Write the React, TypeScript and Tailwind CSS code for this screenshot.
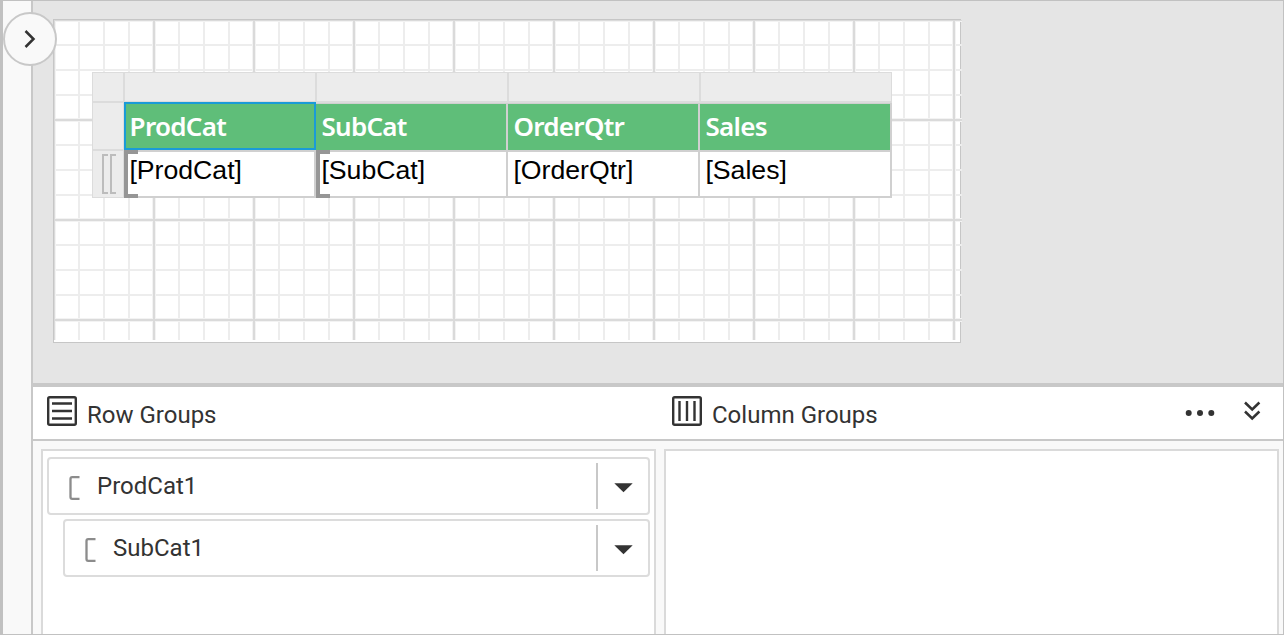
const columns = ['ProdCat', 'SubCat', 'OrderQtr', 'Sales'];

function GridLines() {
  return (
    <svg className="pointer-events-none absolute -top-px -left-px" width="909" height="321" viewBox="0 0 909 321" shapeRendering="crispEdges">
      <defs>
        <pattern id="minor" width="25" height="25" patternUnits="userSpaceOnUse">
          <path d="M0 0h25v2H2v23H0z" fill="#ededed" />
        </pattern>
        <pattern id="major" x="-1" y="-1" width="100" height="100" patternUnits="userSpaceOnUse">
          <path d="M0 0h100v4H4v96H0z" fill="#f3f3f3" />
          <path d="M1 0h2v100h-2zM0 1h100v2H0z" fill="#dadada" />
        </pattern>
      </defs>
      <rect x="1" y="1" width="908" height="320" fill="url(#minor)" />
      <rect x="1" y="1" width="908" height="320" fill="url(#major)" />
    </svg>
  );
}

function GroupBracket() {
  return (
    <div className="absolute top-[-2px] left-0 h-12 w-[14px] border-y-4 border-l-4 border-[#969696]" />
  );
}

function HeaderStrip() {
  return (
    <div className="flex h-[31px] border border-b-2 border-[#dcdcdc] bg-[#ececec]">
      <div className="w-8 border-r-2 border-[#dcdcdc]" />
      <div className="w-48 border-r-2 border-[#dcdcdc]" />
      <div className="w-48 border-r-2 border-[#dcdcdc]" />
      <div className="w-48 border-r-2 border-[#dcdcdc]" />
      <div className="flex-1" />
    </div>
  );
}

function Tablix() {
  return (
    <div className="relative w-[800px]">
      <HeaderStrip />
      <div className="flex">
        <div className="w-8 border-x border-b border-[#dcdcdc] bg-[#ececec]">
          <div className="h-12 border-b-2 border-[#dcdcdc]" />
          <div className="flex h-[46px] gap-[2px] pt-[3px] pl-[9px]">
            <div className="h-10 w-[6px] border-y-2 border-l-2 border-[#bcbcbc]" />
            <div className="h-10 w-[6px] border-y-2 border-l-2 border-[#bcbcbc]" />
          </div>
        </div>
        <div className="w-[768px]">
          <div className="flex h-[49px] border-y-[2px] border-t-[1px] border-[#d0d0d0] bg-[#5fbe79]">
            {columns.map((name, i) => (
              <div
                key={name}
                className={
                  i === 0
                    ? 'relative -mt-[2px] h-12 w-48 border-2 border-[#1a9bd7] pt-[4px] pl-[3.6px] font-["Noto_Sans",sans-serif] text-[26px] leading-[36px] font-semibold tracking-[-0.7px] text-white'
                    : 'h-[46px] w-48 border-r-2 border-[#d0d0d0] pt-[4px] pl-[5.4px] font-["Noto_Sans",sans-serif] text-[26px] leading-[36px] font-semibold tracking-[-0.7px] text-white'
                }
              >
                {name}
              </div>
            ))}
          </div>
          <div className="flex h-[46px] border-b-2 border-[#d0d0d0] bg-white">
            {columns.map((name, i) => (
              <div
                key={name}
                className='relative w-48 border-r-2 border-[#d0d0d0] pt-[3px] pl-[5.4px] font-["Liberation_Sans",sans-serif] text-[26.67px] leading-[30px] text-black'
              >
                {i < 2 && <GroupBracket />}
                {`[${name}]`}
              </div>
            ))}
          </div>
        </div>
      </div>
    </div>
  );
}

function GroupItem({ label }: { label: string }) {
  return (
    <div className="flex h-[58px] items-center rounded-[4px] border-2 border-[#dcdcdc] bg-white">
      <svg className="mt-1 ml-5" width="11" height="24" viewBox="0 0 11 24" fill="none" stroke="#8c8c8c" strokeWidth="2.3">
        <path d="M10.5 1.2H3.2Q1.5 1.2 1.5 3v18q0 1.8 1.7 1.8h7.3" />
      </svg>
      <span className="ml-[17px] flex-1 leading-7">{label}</span>
      <div className="flex h-[46px] w-[52px] items-center border-l-2 border-[#c8c8c8] pl-4">
        <svg className="mt-1" width="19" height="10" viewBox="0 0 19 10">
          <path d="M.3.3h18.4l-9.2 9z" fill="#333" />
        </svg>
      </div>
    </div>
  );
}

function GroupIcon({ vertical }: { vertical?: boolean }) {
  return (
    <svg width="30" height="30" viewBox="0 0 30 30" fill="none" stroke="#333" strokeWidth="2.4">
      <rect x="1.2" y="1.2" width="27.6" height="27.6" rx="1.5" />
      <path d={vertical ? 'M7.5 5v20M15 5v20M22.5 5v20' : 'M5 7.5h20M5 15h20M5 22.5h20'} />
    </svg>
  );
}

export default function App() {
  return (
    <div className='flex h-[635px] w-[1284px] overflow-hidden border border-l-[3px] border-[#c1c1c1] bg-[#f9f9f9] font-[Roboto,sans-serif] text-[24px] text-[#333]'>
      <aside className="relative w-[30px] shrink-0 border-r-2 border-[#c8c8c8]">
        <button className="absolute top-[11px] left-0 z-10 flex h-[54px] w-[54px] items-center justify-center rounded-full border-2 border-[#c8c8c8] bg-[#f9f9f9]">
          <svg width="12" height="20" viewBox="0 0 12 20" fill="none" stroke="#333" strokeWidth="2.5">
            <path d="M1.5 2l8 8-8 8" />
          </svg>
        </button>
      </aside>
      <main className="flex flex-1 flex-col">
        <section className="h-[382px] bg-[#e5e5e5] pt-[18px] pl-5">
          <div className="relative h-[324px] w-[908px] border border-[#c6c6c6] bg-white pt-[52px] pl-[38px]">
            <GridLines />
            <Tablix />
          </div>
        </section>
        <header className="flex h-[58px] border-t-4 border-b-2 border-[#c8c8c8] bg-white">
          <div className="flex w-[625px] gap-[10px] pt-[9px] pl-[14px]">
            <GroupIcon />
            <span className="mt-[5px] leading-7">Row Groups</span>
          </div>
          <div className="flex flex-1 gap-[10px] pt-[9px] pl-[14px]">
            <GroupIcon vertical />
            <span className="mt-[5px] leading-7">Column Groups</span>
          </div>
          <svg className="mt-[22px] mr-[29px]" width="30" height="8" viewBox="0 0 30 8" fill="#333">
            <circle cx="3.7" cy="4" r="3" />
            <circle cx="15" cy="4" r="3" />
            <circle cx="26.3" cy="4" r="3" />
          </svg>
          <svg className="mt-[14px] mr-[22px]" width="17" height="20" viewBox="0 0 17 20" fill="none" stroke="#333" strokeWidth="2.5">
            <path d="M1 1.5l7.2 7 7.2-7M1 10.5l7.2 7 7.2-7" />
          </svg>
        </header>
        <section className="flex flex-1 gap-2 pt-2 pr-1 pl-2">
          <div className="flex w-[615px] flex-col gap-1 border-2 border-b-0 border-[#dadada] bg-white px-1 pt-[6px]">
            <GroupItem label="ProdCat1" />
            <div className="pl-4">
              <GroupItem label="SubCat1" />
            </div>
          </div>
          <div className="flex-1 border-2 border-b-0 border-[#dadada] bg-white" />
        </section>
      </main>
    </div>
  );
}
